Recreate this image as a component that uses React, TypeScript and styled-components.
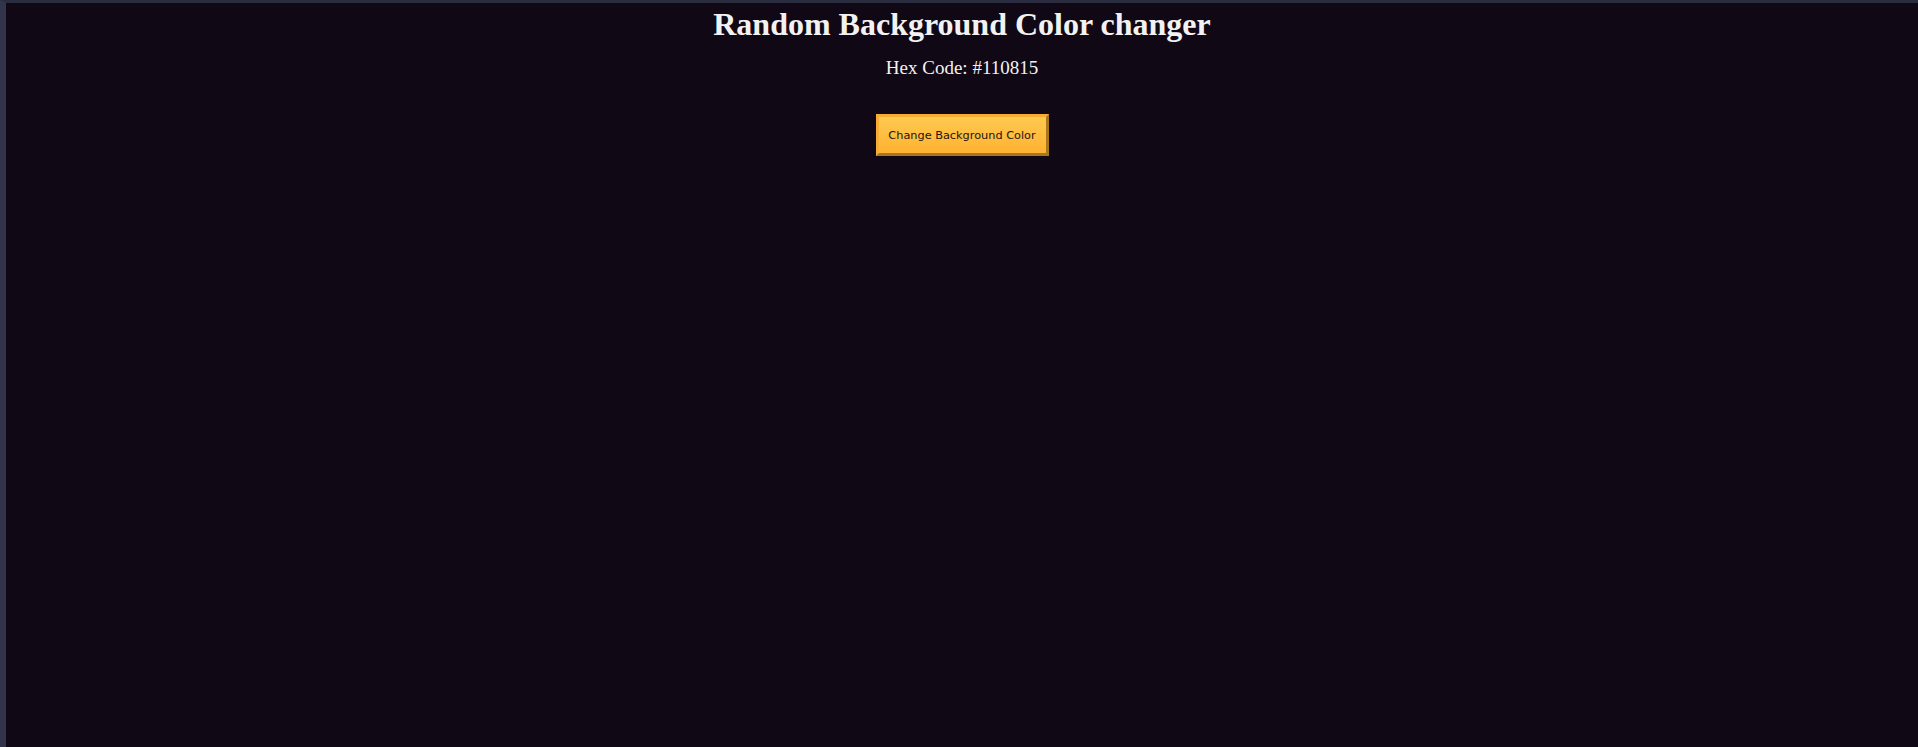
import React, { useState } from 'react';
import styled, { createGlobalStyle } from 'styled-components';

const GlobalStyle = createGlobalStyle`
    html, body {
        margin: 0;
        padding: 0;
        background: #110815;
    }
`

const Frame = styled.div`
    box-sizing: border-box;
    min-height: 100vh;
    border-top: 3px solid #2a2c40;
    border-left: 6px solid #32344c;
    background-color: ${props => props.bg};
    display: flex;
    flex-direction: column;
    align-items: center;
    padding-top: 3px;
    font-family: "Liberation Serif", "Times New Roman", serif;
    color: #f2f2f2;
`

const Title = styled.h1`
    margin: 0;
    font-size: 32px;
    font-weight: bold;
`

const HexCode = styled.p`
    margin: 14px 0 0;
    font-size: 19px;
`

const ChangeButton = styled.button`
    margin-top: 35px;
    width: 173px;
    height: 42px;
    border: 3px solid;
    border-color: #f5ae33 #a8761f #a8761f #f5ae33;
    background: linear-gradient(#ffc94f, #ffb232);
    color: #24140f;
    font-family: "DejaVu Sans", Tahoma, sans-serif;
    font-size: 11.3px;
    cursor: pointer;
`

const randomHex = () =>
    '#' + Math.floor(Math.random() * 0xffffff).toString(16).padStart(6, '0')

const App: React.FC = () => {
    const [color, setColor] = useState('#110815')

    return (
        <>
            <GlobalStyle />
            <Frame bg={color}>
                <Title>Random Background Color changer</Title>
                <HexCode>Hex Code: {color}</HexCode>
                <ChangeButton onClick={() => setColor(randomHex())}>
                    Change Background Color
                </ChangeButton>
            </Frame>
        </>
    )
}

export default App
